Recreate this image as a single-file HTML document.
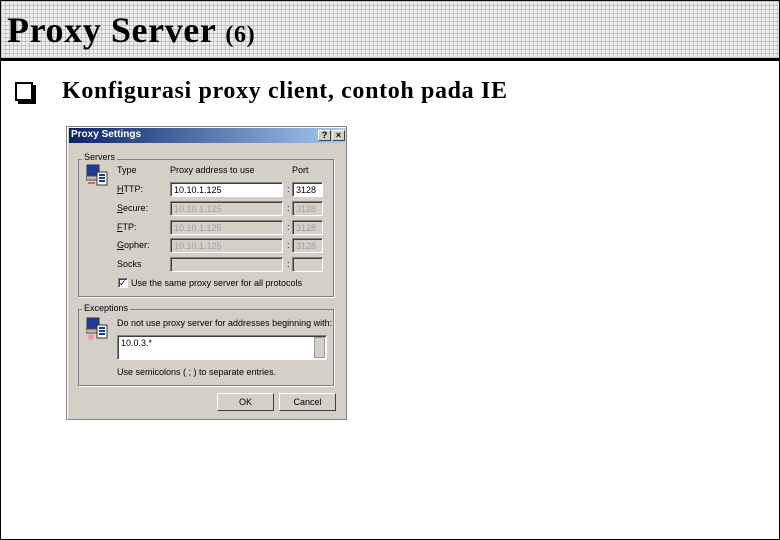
<!DOCTYPE html>
<html><head><meta charset="utf-8"><style>
*{margin:0;padding:0;box-sizing:border-box}
body{width:780px;height:540px;background:#fff;position:relative;overflow:hidden;font-family:"Liberation Sans",sans-serif}
.frame{position:absolute;left:0;top:0;width:780px;height:540px;border:1px solid #000}
.hdr{position:absolute;left:1px;top:1px;width:778px;height:58px;background-color:#eeeeee;
background-image:linear-gradient(#c4c4c4 1px,transparent 1px),linear-gradient(90deg,#c4c4c4 1px,transparent 1px);background-size:4px 4px}
.hline{position:absolute;left:0;top:58px;width:780px;height:3px;background:#000}
.title{position:absolute;left:7px;top:9px;font:bold 36px "Liberation Serif",serif;color:#000;letter-spacing:0.6px}
.title small{font-size:24px}
.cb{position:absolute;left:15px;top:82px;width:18px;height:19px;border:2px solid #000;box-shadow:3px 3px 0 #000;background:#fff}
.bt{position:absolute;left:62px;top:78px;font:bold 24px "Liberation Serif",serif;letter-spacing:0.65px}
.dlg{position:absolute;left:66px;top:126px;width:281px;height:294px;background:#d4d0c8;border:1px solid #888;box-shadow:inset 1px 1px 0 #fff}
.tb{position:absolute;left:2px;top:1px;width:276px;height:15px;background:linear-gradient(90deg,#0a246a,#a6caf0)}
.tb span{position:absolute;left:2px;top:1px;color:#fff;font:bold 10px "Liberation Sans",sans-serif}
.tbb{position:absolute;top:2px;width:13px;height:11px;background:#d4d0c8;border:1px solid;border-color:#fff #404040 #404040 #fff;font:bold 9px sans-serif;text-align:center;line-height:9px}
.d{position:absolute;font-size:9px;color:#000;white-space:nowrap}
.grp{position:absolute;border:1px solid #808080;box-shadow:1px 1px 0 #fff}
.in{position:absolute;height:15px;border:1px solid;border-color:#808080 #fff #fff #808080;box-shadow:inset 1px 1px 0 #404040;background:#fff;font-size:9px;padding:2px 3px}
.in.dis{background:#d4d0c8;color:#a0a0a0}
.btn{position:absolute;height:18px;width:57px;border:1px solid;border-color:#fff #404040 #404040 #fff;font-size:9px;text-align:center;line-height:16px}
.ico{position:absolute;width:22px;height:24px}
</style></head><body>
<div class="hdr"></div><div class="hline"></div><div class="frame"></div>
<div class="title">Proxy Server <small>(6)</small></div>
<div class="cb"></div>
<div class="bt">Konfigurasi proxy client, contoh pada IE</div>
<div class="dlg">
 <div class="tb"><span>Proxy Settings</span>
  <div class="tbb" style="left:249px">?</div><div class="tbb" style="left:263px">×</div></div>
 <div class="grp" style="left:11px;top:32px;width:256px;height:138px"></div>
 <div class="d" style="left:15px;top:25px;background:#d4d0c8;padding:0 2px">Servers</div>
 <svg class="ico" style="left:19px;top:37px" viewBox="0 0 22 24"><rect x="1" y="1" width="12" height="10" fill="#1c3c9c" stroke="#333"/><rect x="0" y="12" width="14" height="4" fill="#bbb" stroke="#555"/><rect x="11" y="8" width="10" height="13" fill="#fff" stroke="#333"/><path d="M13 11h6M13 14h6M13 17h6" stroke="#1c3c9c" stroke-width="2"/><path d="M2 19h7" stroke="#c00"/></svg>
 <div class="d" style="left:50px;top:38px">Type</div>
 <div class="d" style="left:103px;top:38px">Proxy address to use</div>
 <div class="d" style="left:225px;top:38px">Port</div>
 <div class="d" style="left:50px;top:57px"><u>H</u>TTP:</div>
 <div class="d" style="left:50px;top:76px"><u>S</u>ecure:</div>
 <div class="d" style="left:50px;top:95px"><u>F</u>TP:</div>
 <div class="d" style="left:50px;top:113px"><u>G</u>opher:</div>
 <div class="d" style="left:50px;top:132px">Socks</div>
 <div class="in" style="left:103px;top:55px;width:113px">10.10.1.125</div>
 <div class="in dis" style="left:103px;top:74px;width:113px">10.10.1.125</div>
 <div class="in dis" style="left:103px;top:93px;width:113px">10.10.1.125</div>
 <div class="in dis" style="left:103px;top:111px;width:113px">10.10.1.125</div>
 <div class="in dis" style="left:103px;top:130px;width:113px"></div>
 <div class="d" style="left:220px;top:57px">:</div><div class="d" style="left:220px;top:76px">:</div><div class="d" style="left:220px;top:95px">:</div><div class="d" style="left:220px;top:113px">:</div><div class="d" style="left:220px;top:132px">:</div>
 <div class="in" style="left:225px;top:55px;width:31px">3128</div>
 <div class="in dis" style="left:225px;top:74px;width:31px">3128</div>
 <div class="in dis" style="left:225px;top:93px;width:31px">3128</div>
 <div class="in dis" style="left:225px;top:111px;width:31px">3128</div>
 <div class="in dis" style="left:225px;top:130px;width:31px"></div>
 <div class="in" style="left:51px;top:151px;width:10px;height:10px;padding:0;font-size:9px;line-height:8px">✓</div>
 <div class="d" style="left:64px;top:151px">Use the same proxy server for all protocols</div>
 <div class="grp" style="left:11px;top:182px;width:256px;height:77px"></div>
 <div class="d" style="left:15px;top:176px;background:#d4d0c8;padding:0 2px">Exceptions</div>
 <svg class="ico" style="left:19px;top:190px" viewBox="0 0 22 24"><rect x="1" y="1" width="12" height="10" fill="#1c3c9c" stroke="#333"/><rect x="0" y="12" width="14" height="4" fill="#bbb" stroke="#555"/><rect x="11" y="8" width="10" height="13" fill="#fff" stroke="#333"/><path d="M13 11h6M13 14h6M13 17h6" stroke="#1c3c9c" stroke-width="2"/><circle cx="5" cy="20" r="3" fill="#e99"/></svg>
 <div class="d" style="left:50px;top:191px">Do not use proxy server for addresses beginning with:</div>
 <div class="in" style="left:50px;top:208px;width:210px;height:25px">10.0.3.*</div>
 <div style="position:absolute;left:247px;top:210px;width:11px;height:21px;background:#d4d0c8;border:1px solid #999"></div>
 <div class="d" style="left:50px;top:240px">Use semicolons ( ; ) to separate entries.</div>
 <div class="btn" style="left:150px;top:266px">OK</div>
 <div class="btn" style="left:212px;top:266px">Cancel</div>
</div>
</body></html>
